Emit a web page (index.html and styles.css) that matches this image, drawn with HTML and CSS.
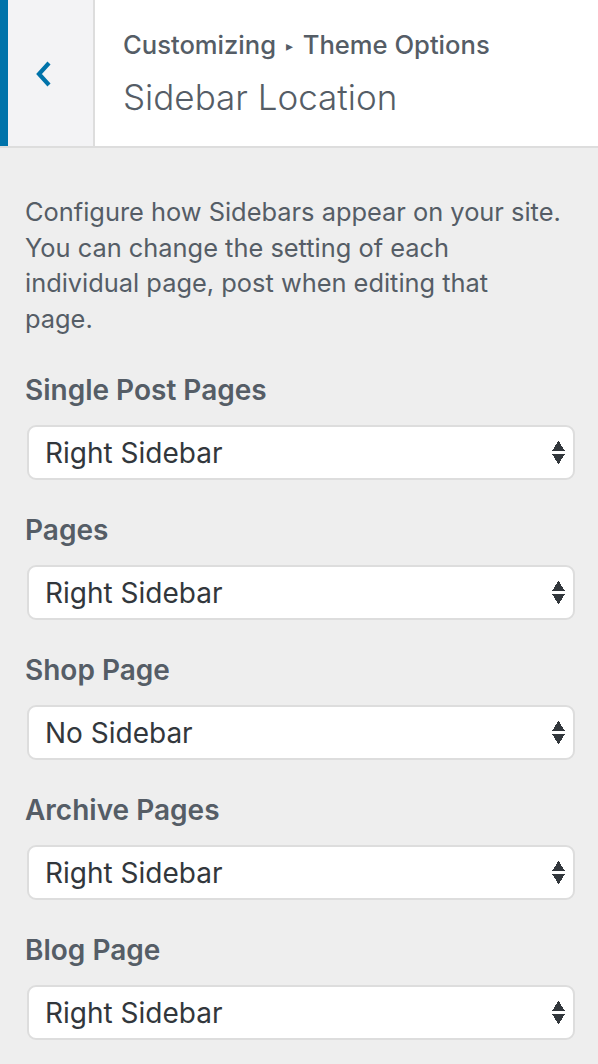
FILE: index.html
```html
<!DOCTYPE html>
<html lang="en">
<head>
    <meta charset="UTF-8">
    <meta name="viewport" content="width=device-width, initial-scale=1.0">
    <title>Sidebar Location</title>
    <link rel="stylesheet" href="styles.css">
</head>
<body>
    <div class="header">
        <button class="back" type="button" aria-label="Back">
            <svg width="18" height="28" viewBox="0 0 18 28">
                <path d="M14 3 L4 14 L14 25" fill="none" stroke="#0073aa" stroke-width="4.2"/>
            </svg>
        </button>
        <div class="title-wrap">
            <div class="crumb">Customizing <span class="arrow">&#9656;</span> Theme Options</div>
            <h1>Sidebar Location</h1>
        </div>
    </div>

    <div class="panel">
        <p class="desc">Configure how Sidebars appear on your site. You can change the setting of each individual page, post when editing that page.</p>

        <div class="control">
            <label for="singlePost">Single Post Pages</label>
            <div class="select">
                <select id="singlePost">
                    <option>Right Sidebar</option>
                    <option>Left Sidebar</option>
                    <option>No Sidebar</option>
                </select>
            </div>
        </div>

        <div class="control">
            <label for="pages">Pages</label>
            <div class="select">
                <select id="pages">
                    <option>Right Sidebar</option>
                    <option>Left Sidebar</option>
                    <option>No Sidebar</option>
                </select>
            </div>
        </div>

        <div class="control">
            <label for="shopPage">Shop Page</label>
            <div class="select">
                <select id="shopPage">
                    <option>No Sidebar</option>
                    <option>Right Sidebar</option>
                    <option>Left Sidebar</option>
                </select>
            </div>
        </div>

        <div class="control">
            <label for="archivePages">Archive Pages</label>
            <div class="select">
                <select id="archivePages">
                    <option>Right Sidebar</option>
                    <option>Left Sidebar</option>
                    <option>No Sidebar</option>
                </select>
            </div>
        </div>

        <div class="control">
            <label for="blogPage">Blog Page</label>
            <div class="select">
                <select id="blogPage">
                    <option>Right Sidebar</option>
                    <option>Left Sidebar</option>
                    <option>No Sidebar</option>
                </select>
            </div>
        </div>
    </div>
</body>
</html>
```

FILE: styles.css
```css
body {
    font-family: Inter, "Noto Sans", sans-serif;
    background: #eeeeee;
    margin: 0;
    padding: 0;
    color: #555d66;
}
.header {
    display: flex;
    height: 146px;
    background: #fff;
    border-bottom: 2px solid #dddddd;
}
.back {
    width: 95px;
    padding: 0;
    margin: 0;
    border: none;
    border-left: 8px solid #0073aa;
    border-right: 2px solid #dddddd;
    background: #f3f3f5;
    display: flex;
    align-items: center;
    justify-content: center;
    cursor: pointer;
}
.back svg {
    margin-right: 14px;
    margin-top: 2px;
}
.title-wrap {
    padding: 30px 0 0 28px;
}
.crumb {
    font-size: 25.6px;
    font-weight: 500;
    color: #555d66;
    line-height: 30px;
}
.arrow {
    font-size: 14px;
    vertical-align: 3px;
    margin: 0 3px;
}
h1 {
    margin: 14px 0 0;
    font-size: 35px;
    font-weight: 300;
    color: #555d66;
    line-height: 44px;
}
.panel {
    padding: 46px 23px 0 25px;
}
.desc {
    max-width: 536px;
    margin: 0 0 39px;
    font-size: 25.4px;
    line-height: 35.5px;
}
.control {
    margin-bottom: 35px;
}
.control label {
    display: block;
    font-size: 28px;
    font-weight: 600;
    line-height: 30px;
    margin-bottom: 20px;
}
.select {
    position: relative;
    margin-left: 2px;
}
.select select {
    width: 100%;
    height: 55px;
    appearance: none;
    -webkit-appearance: none;
    background: #fff;
    border: 2px solid #dddddd;
    border-radius: 9px;
    padding: 0 40px 0 16px;
    font-family: inherit;
    font-size: 28px;
    color: #32373c;
}
.select::after {
    content: "";
    position: absolute;
    right: 10px;
    top: 15px;
    width: 13px;
    height: 26px;
    background:
        linear-gradient(to bottom right, transparent 50%, #32373c 50%) 0 0 / 7px 11px no-repeat,
        linear-gradient(to bottom left, transparent 50%, #32373c 50%) 6px 0 / 7px 11px no-repeat,
        linear-gradient(to top right, transparent 50%, #32373c 50%) 0 14px / 7px 11px no-repeat,
        linear-gradient(to top left, transparent 50%, #32373c 50%) 6px 14px / 7px 11px no-repeat;
    pointer-events: none;
}
```
